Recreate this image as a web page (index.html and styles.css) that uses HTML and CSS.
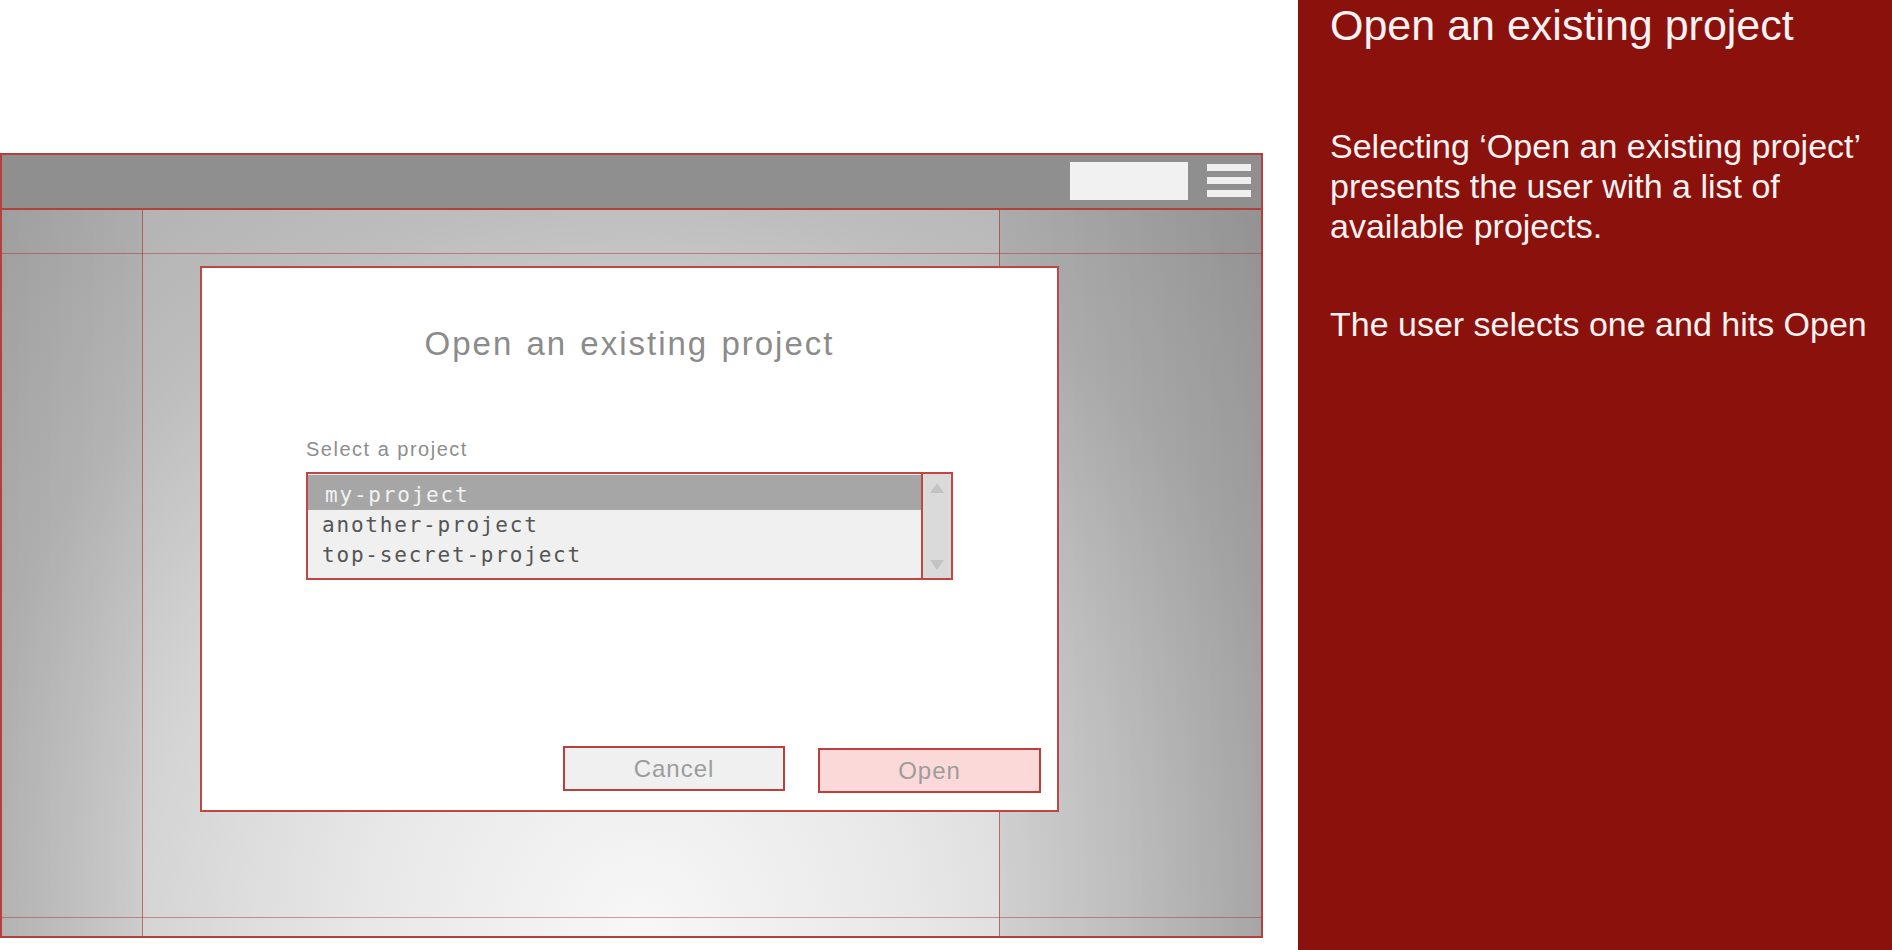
FILE: index.html
```html
<!DOCTYPE html>
<html lang="en">
<head>
<meta charset="utf-8">
<title>Open an existing project</title>
<link rel="stylesheet" href="styles.css">
</head>
<body>
<div class="page">
  <div class="stage">
    <div class="frame">
      <div class="topbar">
        <div class="search"></div>
        <div class="burger"><span></span><span></span><span></span></div>
      </div>
      <div class="viewport">
        <div class="cols">
          <div class="col left"></div>
          <div class="col main"></div>
          <div class="col right"></div>
        </div>
        <div class="rows">
          <div class="band top"></div>
          <div class="band bottom"></div>
        </div>
        <div class="dialog">
          <div class="dialog-title">Open an existing project</div>
          <div class="form">
            <div class="label">Select a project</div>
            <div class="listbox">
              <div class="items">
                <div class="item sel">my-project</div>
                <div class="item">another-project</div>
                <div class="item">top-secret-project</div>
              </div>
              <div class="scroll">
                <span class="tri up"></span>
                <span class="tri down"></span>
              </div>
            </div>
          </div>
          <div class="actions">
            <div class="btn cancel">Cancel</div>
            <div class="btn open">Open</div>
          </div>
        </div>
      </div>
    </div>
  </div>
  <aside class="notes">
    <h1 class="notes-title">Open an existing project</h1>
    <p class="notes-p first">Selecting ‘Open an existing project’<br>presents the user with a list of<br>available projects.</p>
    <p class="notes-p second">The user selects one and hits Open</p>
  </aside>
</div>
</body>
</html>
```

FILE: styles.css
```css
html, body {
  margin: 0;
  padding: 0;
  background: #ffffff;
  overflow: hidden;
}

body {
  font-family: "Liberation Sans", Arial, sans-serif;
}

.page {
  display: flex;
  width: 1892px;
  height: 950px;
}

.stage {
  width: 1298px;
  flex: none;
  padding-top: 153px;
  box-sizing: border-box;
}

.frame {
  width: 1263px;
  height: 785px;
  box-sizing: border-box;
  border: 2px solid #b3403d;
  display: flex;
  flex-direction: column;
}

.topbar {
  height: 55px;
  box-sizing: border-box;
  flex: none;
  background: #8f8f8f;
  border-bottom: 2px solid #b3403d;
  display: flex;
  align-items: center;
  justify-content: flex-end;
  gap: 19px;
  padding-right: 10px;
}

.search {
  width: 118px;
  height: 38px;
  background: #f1f1f1;
  margin-bottom: 2px;
}

.burger {
  width: 44px;
  display: flex;
  flex-direction: column;
  gap: 6px;
  margin-bottom: 3px;
}

.burger span {
  display: block;
  height: 7px;
  background: #efefef;
}

.viewport {
  flex: 1;
  display: grid;
  grid-template-columns: 1fr;
  grid-template-rows: 1fr;
  background: radial-gradient(ellipse 760px 800px at 638px 720px, #f7f7f7 0%, #e8e8e8 35%, #d4d4d4 66%, #bdbdbd 92%, #adadad 125%);
}

.cols, .rows, .dialog {
  grid-area: 1 / 1;
}

.cols {
  display: flex;
}

.col.left {
  width: 141px;
  box-sizing: border-box;
  border-right: 1px solid rgba(175, 40, 40, 0.55);
  background: linear-gradient(to right, rgba(0, 0, 0, 0.09), rgba(0, 0, 0, 0.04));
}

.col.main {
  flex: 1;
}

.col.right {
  width: 262px;
  box-sizing: border-box;
  border-left: 1px solid rgba(175, 40, 40, 0.55);
  background: linear-gradient(to right, rgba(0, 0, 0, 0.07), rgba(0, 0, 0, 0.16));
}

.rows {
  display: flex;
  flex-direction: column;
}

.band.top {
  height: 44px;
  box-sizing: border-box;
  border-bottom: 1px solid rgba(175, 40, 40, 0.45);
}

.band.bottom {
  margin-top: auto;
  height: 19px;
  box-sizing: border-box;
  border-top: 1px solid rgba(175, 40, 40, 0.45);
}

.dialog {
  align-self: start;
  justify-self: start;
  margin: 56px 0 0 198px;
  width: 859px;
  height: 546px;
  box-sizing: border-box;
  border: 2px solid #bf4743;
  background: #ffffff;
  display: flex;
  flex-direction: column;
}

.dialog-title {
  margin-top: 56px;
  font-size: 33px;
  line-height: 40px;
  letter-spacing: 2px;
  word-spacing: 2px;
  text-align: center;
  color: #8b8b8b;
}

.form {
  margin-left: 104px;
}

.label {
  margin-top: 73px;
  font-size: 20px;
  line-height: 24px;
  letter-spacing: 1.5px;
  color: #8d8d8d;
}

.listbox {
  margin-top: 11px;
  width: 647px;
  height: 108px;
  box-sizing: border-box;
  border: 2px solid #bf4743;
  background: #f0f0f0;
  display: flex;
}

.items {
  flex: 1;
  padding-top: 1px;
}

.item {
  font-family: "DejaVu Sans Mono", "Liberation Mono", monospace;
  font-size: 21px;
  line-height: 30px;
  letter-spacing: 1.8px;
  color: #555555;
  padding-left: 14px;
  white-space: nowrap;
}

.item.sel {
  background: #a6a6a6;
  color: #f2f2f2;
  padding-top: 5px;
  padding-left: 17px;
}

.scroll {
  width: 30px;
  box-sizing: border-box;
  border-left: 2px solid #bf4743;
  background: #dadada;
  display: flex;
  flex-direction: column;
  align-items: center;
  justify-content: space-between;
  padding: 9px 0 8px;
}

.tri {
  display: block;
  width: 0;
  height: 0;
  border-left: 7px solid transparent;
  border-right: 7px solid transparent;
}

.tri.up {
  border-bottom: 10px solid #c3c3c3;
}

.tri.down {
  border-top: 10px solid #c3c3c3;
}

.actions {
  margin-top: auto;
  display: flex;
  justify-content: flex-end;
  align-items: flex-end;
  gap: 33px;
  padding-right: 16px;
  padding-bottom: 17px;
}

.btn {
  height: 45px;
  box-sizing: border-box;
  border: 2px solid #b8403d;
  display: flex;
  align-items: center;
  justify-content: center;
  font-size: 24px;
  letter-spacing: 1px;
  color: #9c9c9c;
}

.btn.cancel {
  width: 222px;
  background: #f0f0f0;
  margin-bottom: 2px;
}

.btn.open {
  width: 223px;
  background: #fcd9d9;
}

.notes {
  flex: 1;
  background: #8b110c;
  color: #f7f2f2;
  padding-left: 32px;
  box-sizing: border-box;
}

.notes-title {
  margin: 0;
  font-size: 43px;
  line-height: 50px;
  font-weight: normal;
  white-space: nowrap;
}

.notes-p {
  margin: 0;
  font-size: 34px;
  line-height: 40px;
  white-space: nowrap;
}

.notes-p.first {
  margin-top: 76px;
}

.notes-p.second {
  margin-top: 58px;
}
```
